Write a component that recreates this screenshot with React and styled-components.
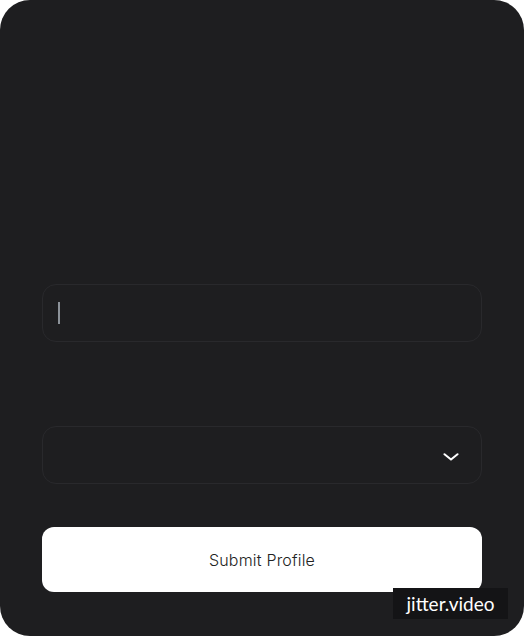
import styled, { createGlobalStyle } from 'styled-components'

const Global = createGlobalStyle`
  html, body {
    margin: 0;
    padding: 0;
    background: #ffffff;
  }
  * { box-sizing: border-box; }
`

export default function App() {
  return (
    <>
      <Global />
      <Panel>
        <Form>
          <Field>
            <Caret />
          </Field>
          <Field $select>
            <Chevron viewBox="0 0 16 8">
              <path d="M1.5 1.2 L8 6.6 L14.5 1.2" />
            </Chevron>
          </Field>
          <Submit>Submit Profile</Submit>
        </Form>
        <Badge>jitter.video</Badge>
      </Panel>
    </>
  )
}

const Panel = styled.div`
  position: relative;
  width: 524px;
  height: 636px;
  background: #1e1e20;
  border-radius: 30px;
  overflow: hidden;
  display: flex;
  flex-direction: column;
  justify-content: flex-end;
  padding: 0 42px 44px;
  font-family: 'Inter', 'Liberation Sans', sans-serif;
`

const Form = styled.div`
  display: flex;
  flex-direction: column;
`

const Field = styled.div`
  height: 58px;
  border: 1px solid #29292c;
  border-radius: 14px;
  display: flex;
  align-items: center;
  justify-content: ${p => (p.$select ? 'flex-end' : 'flex-start')};
  padding: ${p => (p.$select ? '3px 22px 0 15px' : '0 15px')};
  margin-bottom: ${p => (p.$select ? '43px' : '84px')};
`

const Caret = styled.div`
  width: 2px;
  height: 22px;
  background: #8c9299;
`

const Chevron = styled.svg`
  width: 16px;
  height: 8px;
  fill: none;
  stroke: #ffffff;
  stroke-width: 2;
  stroke-linecap: round;
  stroke-linejoin: round;
`

const Submit = styled.button`
  height: 65px;
  border: none;
  border-radius: 12px;
  background: #ffffff;
  color: #222222;
  font-family: 'Inter', 'Liberation Sans', sans-serif;
  font-size: 16px;
  font-weight: 300;
  letter-spacing: 0.2px;
  padding-top: 2px;
`

const Badge = styled.div`
  position: absolute;
  left: 393px;
  top: 588px;
  width: 115px;
  height: 31px;
  background: #141416;
  color: #ffffff;
  font-family: 'Lato', 'Liberation Sans', sans-serif;
  font-size: 19px;
  display: flex;
  align-items: center;
  justify-content: center;
`
